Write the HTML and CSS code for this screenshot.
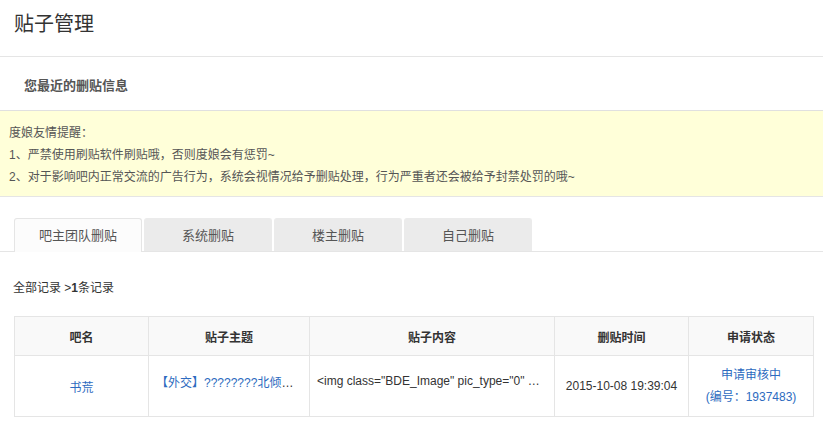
FILE: index.html
```html
<!DOCTYPE html>
<html lang="zh-CN">
<head>
	<meta charset="UTF-8">
	<title>贴子管理</title>
	<link rel="stylesheet" href="styles.css">
</head>
<body>
	<div class="page-title">贴子管理</div>
	<div class="sub-title">您最近的删贴信息</div>
	<div class="notice">
		<p>度娘友情提醒：</p>
		<p>1、严禁使用刷贴软件刷贴哦，否则度娘会有惩罚~</p>
		<p>2、对于影响吧内正常交流的广告行为，系统会视情况给予删贴处理，行为严重者还会被给予封禁处罚的哦~</p>
	</div>
	<ul class="tabs">
		<li class="tab on">吧主团队删贴</li>
		<li class="tab">系统删贴</li>
		<li class="tab">楼主删贴</li>
		<li class="tab">自己删贴</li>
	</ul>
	<div class="crumb">全部记录 &gt;<b>1</b>条记录</div>
	<table class="list">
		<colgroup>
			<col class="c1">
			<col class="c2">
			<col class="c3">
			<col class="c4">
			<col class="c5">
		</colgroup>
		<thead>
			<tr>
				<th>吧名</th>
				<th>贴子主题</th>
				<th>贴子内容</th>
				<th>删贴时间</th>
				<th>申请状态</th>
			</tr>
		</thead>
		<tbody>
			<tr>
				<td class="center"><a href="#">书荒</a></td>
				<td class="clip"><div class="ellipsis"><a href="#">【外交】????????北倾吧新闻发布会</a></div></td>
				<td class="clip"><div class="ellipsis">&lt;img class="BDE_Image" pic_type="0" width="560" height="315" src="#"&gt;</div></td>
				<td class="center">2015-10-08 19:39:04</td>
				<td class="center status">
					<a href="#">申请审核中</a><br>
					<a href="#">(编号：1937483)</a>
				</td>
			</tr>
		</tbody>
	</table>
</body>
</html>
```

FILE: styles.css
```css
html *{
	padding:0;
	margin:0;
}
body{
	font-family:"Liberation Sans","Noto Sans CJK SC",sans-serif;
	font-size:12px;
	color:#333;
	background:#fff;
}
a{
	color:#2d6bc0;
	text-decoration:none;
}
.page-title{
	height:56px;
	line-height:48px;
	padding-left:14px;
	font-size:20px;
	color:#333;
	border-bottom:1px solid #e5e5e5;
}
.sub-title{
	height:53px;
	line-height:58px;
	padding-left:24px;
	font-size:13px;
	font-weight:bold;
	color:#555;
}
.notice{
	background:#ffffd9;
	border-top:1px solid #e0e0e0;
	border-bottom:1px solid #e5e5e5;
	padding:11px 9px 8px;
	color:#555;
	line-height:22px;
}
.tabs{
	list-style:none;
	display:flex;
	gap:2px;
	margin-top:21px;
	padding-left:14px;
	border-bottom:1px solid #e5e5e5;
}
.tab{
	width:128px;
	height:33px;
	line-height:34px;
	text-align:center;
	font-size:13px;
	color:#555;
	background:#ebebeb;
	border-radius:3px 3px 0 0;
	margin-bottom:-1px;
	box-sizing:border-box;
	border:1px solid #ebebeb;
	border-bottom:none;
}
.tab.on{
	background:#fcfcfc;
	border-color:#e5e5e5;
	height:34px;
}
.crumb{
	padding-left:13px;
	margin-top:28px;
	line-height:16px;
	color:#333;
}
.list{
	margin:20px 0 0 14px;
	width:799px;
	border-collapse:collapse;
	table-layout:fixed;
}
.list th,
.list td{
	border:1px solid #e5e5e5;
	box-sizing:border-box;
}
.list th{
	height:39px;
	padding:0;
	background:#f9f9f9;
	font-weight:bold;
	color:#333;
	font-size:12px;
}
.list td{
	height:61px;
	color:#333;
}
.c1{ width:134px; }
.c2{ width:161px; }
.c3{ width:245px; }
.c4{ width:134px; }
.c5{ width:125px; }
.center{
	text-align:center;
	padding:0;
}
.clip{
	padding:0 6px 10px 7px;
}
.ellipsis{
	white-space:nowrap;
	overflow:hidden;
	text-overflow:ellipsis;
}
.status{
	line-height:22px;
}
```
